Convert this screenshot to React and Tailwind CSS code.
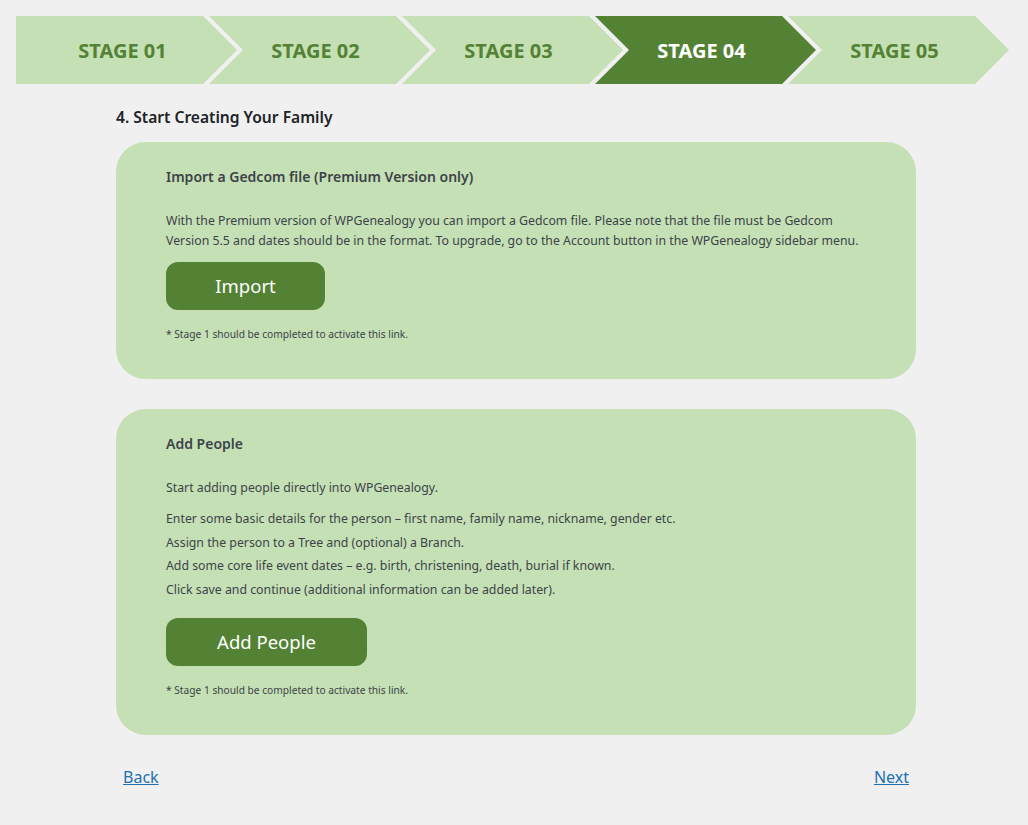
import React from "react";

const stages = ["STAGE 01", "STAGE 02", "STAGE 03", "STAGE 04", "STAGE 05"];
const current = 3;

const Stepper = () => {
  return (
    <div className="flex pl-4 pt-4">
      {stages.map((label, i) => (
        <div
          key={label}
          className={
            (i === 0
              ? "[clip-path:polygon(0_0,187px_0,100%_50%,187px_100%,0_100%)] "
              : "-ml-[28px] [clip-path:polygon(0_0,187px_0,100%_50%,187px_100%,0_100%,34px_50%)] ") +
            (i === current ? "bg-[#548235] text-white " : "bg-[#c5e0b4] text-[#548235] ") +
            "flex h-[68px] w-[221px] shrink-0 items-center justify-center pr-2 pt-[2px] text-[20px] font-bold"
          }
        >
          {label}
        </div>
      ))}
    </div>
  );
};

const Card = ({ title, children, button, btnWidth }) => (
  <div className="rounded-[30px] bg-[#c5e0b4] pt-[25px] pr-[50px] pb-[38px] pl-[50px] text-[#3c434a]">
    <h3 className="text-[14px] font-semibold leading-[20px]">{title}</h3>
    <div className="mt-[24px] text-[12.3px] leading-[20px]">{children}</div>
    <button className={btnWidth + " mt-[11px] h-[48px] rounded-[12px] bg-[#548235] text-[18.5px] text-white"}>
      {button}
    </button>
    <p className="mt-[17px] text-[10.2px] leading-[14px]">
      * Stage 1 should be completed to activate this link.
    </p>
  </div>
);

export default function App() {
  return (
    <div className="min-h-screen bg-[#f0f0f1] pb-10 font-['Noto_Sans',sans-serif] text-[#1d2327]">
      <Stepper />
      <div className="mx-[116px] w-[800px]">
        <h2 className="mt-[22px] text-[15.6px] font-semibold leading-[22px]">
          4. Start Creating Your Family
        </h2>
        <div className="mt-[14px] flex flex-col gap-[30px]">
          <Card title="Import a Gedcom file (Premium Version only)" button="Import" btnWidth="w-[159px]">
            <p>
              With the Premium version of WPGenealogy you can import a Gedcom file. Please note that the file
              must be Gedcom Version 5.5 and dates should be in the format. To upgrade, go to the Account button
              in the WPGenealogy sidebar menu.
            </p>
          </Card>
          <Card title="Add People" button="Add People" btnWidth="w-[201px]">
            <p className="mt-[1px] mb-[9px]">Start adding people directly into WPGenealogy.</p>
            <p className="leading-[23.5px]">
              Enter some basic details for the person – first name, family name, nickname, gender etc.
            </p>
            <p className="leading-[23.5px]">Assign the person to a Tree and (optional) a Branch.</p>
            <p className="leading-[23.5px]">
              Add some core life event dates – e.g. birth, christening, death, burial if known.
            </p>
            <p className="mb-[6px] leading-[23.5px]">
              Click save and continue (additional information can be added later).
            </p>
          </Card>
        </div>
        <div className="mt-[30px] flex justify-between px-[7px] text-[16px] text-[#2271b1]">
          <a href="#" className="underline">
            Back
          </a>
          <a href="#" className="underline">
            Next
          </a>
        </div>
      </div>
    </div>
  );
}
